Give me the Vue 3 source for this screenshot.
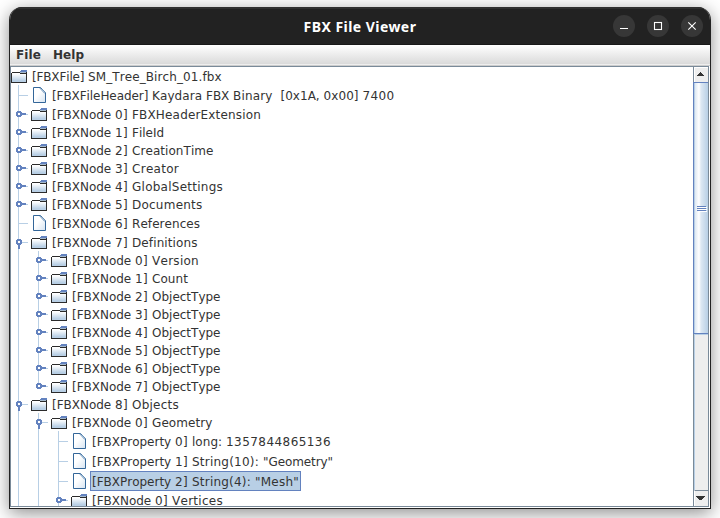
<script setup>
const node = (depth, index, name, extra = {}) => ({ depth, text: `[FBXNode ${index}] ${name}`, icon: 'folder', handle: 'closed', ...extra })

const rows = [
  { depth: 0, text: '[FBXFile] SM_Tree_Birch_01.fbx', icon: 'folder' },
  { depth: 1, text: '[FBXFileHeader] Kaydara FBX Binary  [0x1A, 0x00] 7400', icon: 'file' },
  node(1, 0, 'FBXHeaderExtension'),
  node(1, 1, 'FileId'),
  node(1, 2, 'CreationTime'),
  node(1, 3, 'Creator'),
  node(1, 4, 'GlobalSettings'),
  node(1, 5, 'Documents'),
  node(1, 6, 'References', { icon: 'file', handle: null }),
  node(1, 7, 'Definitions', { handle: 'open' }),
  node(2, 0, 'Version'),
  node(2, 1, 'Count'),
  node(2, 2, 'ObjectType'),
  node(2, 3, 'ObjectType'),
  node(2, 4, 'ObjectType'),
  node(2, 5, 'ObjectType'),
  node(2, 6, 'ObjectType'),
  node(2, 7, 'ObjectType', { last: true }),
  node(1, 8, 'Objects', { handle: 'open' }),
  node(2, 0, 'Geometry', { handle: 'open' }),
  { depth: 3, text: '[FBXProperty 0] long: 1357844865136', icon: 'file' },
  { depth: 3, text: '[FBXProperty 1] String(10): "Geometry"', icon: 'file' },
  { depth: 3, text: '[FBXProperty 2] String(4): "Mesh"', icon: 'file', selected: true },
  node(3, 0, 'Vertices'),
]

// Swing lays glyphs out on whole-pixel hinted advances; spread each word's drift over its letters.
const hinting = {
  '[FBXFile]': -1, 'SM_Tree_Birch_01.fbx': 1.5, Kaydara: 1, Binary: 1.5, '[0x1A,': -1, '0x00]': -1,
  FBXHeaderExtension: 4, CreationTime: 2.5, Creator: 3, GlobalSettings: 4, Documents: 1.5,
  References: 2, Definitions: 2.5, Version: 3, ObjectType: 0.5, Objects: 2, Geometry: 1.5,
  '1357844865136': 1, '"Geometry"': -1, '"Mesh"': 1, Vertices: 3,
}
const ctx = document.createElement('canvas').getContext('2d')
ctx.font = '12px "DejaVu Sans"'
ctx.fontKerning = 'none'
const advance = (c) => ctx.measureText(c.repeat(10)).width / 10
const words = (text) => text.match(/\S+\s*/g).map((word) => {
  const drift = [...word].reduce((sum, c) => sum + Math.round(advance(c)) - advance(c), hinting[word.trim()] ?? 0)
  return { word, spacing: `${(drift / word.length).toFixed(4)}px` }
})
</script>

<template>
  <div class="desktop">
    <div class="window">
      <header class="titlebar">
        <span class="side"></span>
        <h1>FBX File Viewer</h1>
        <div class="side controls">
          <button aria-label="Minimize"><svg width="22" height="22"><path d="M7 13.5h8" /></svg></button>
          <button aria-label="Maximize"><svg width="22" height="22"><rect x="7.5" y="7.5" width="7" height="7" /></svg></button>
          <button aria-label="Close"><svg width="22" height="22"><path d="M7.3 7.3l7.4 7.4M14.7 7.3l-7.4 7.4" /></svg></button>
        </div>
      </header>
      <nav class="menubar"><span>File</span><span>Help</span></nav>
      <main class="pane">
        <div class="tree">
          <div v-for="(row, i) in rows" :key="i" class="row" :class="row.icon">
            <span v-for="d in row.depth" :key="d" class="guide" :class="{ last: row.last && d === row.depth }">
              <svg v-if="d === row.depth" width="20" height="18" shape-rendering="crispEdges">
                <path d="M8 9.5h9" stroke="#b8cfe5" />
                <g v-if="row.handle" fill="#6382bf">
                  <path d="M6 6h4v1h1v4h-1v1H6v-1H5V7h1z" />
                  <path v-if="row.handle === 'closed'" d="M11 8h4v2h-4z" />
                  <path v-else d="M7 12h2v4H7z" />
                  <path d="M7 8h2v2H7z" fill="#fff" />
                </g>
              </svg>
            </span>
            <svg v-if="row.icon === 'folder'" class="icon" width="16" height="18" shape-rendering="crispEdges">
              <defs>
                <linearGradient id="folderFill" x1="0" y1="0" x2="0" y2="1">
                  <stop offset="0.1" stop-color="#fff" />
                  <stop offset="0.85" stop-color="#b8cfe5" />
                </linearGradient>
              </defs>
              <path d="M1 6h14v9H1z" fill="url(#folderFill)" />
              <path d="M10 3h6v2H9V4h1z" fill="#6382bf" />
              <path d="M9 5h6v1H9z" fill="#a3b8cc" />
              <path d="M1 5h8v1h6V5h1v11H0V6h1zM1 6v9h14V7H9V6z" fill="#2b2b2b" fill-rule="evenodd" />
            </svg>
            <svg v-else class="icon" width="16" height="16">
              <defs>
                <linearGradient id="fileFill" x1="0" y1="0" x2="1" y2="1">
                  <stop offset="0.4" stop-color="#fff" />
                  <stop offset="1" stop-color="#d5e3f1" />
                </linearGradient>
              </defs>
              <path d="M2.5.5h7l5 5v10h-12z" fill="url(#fileFill)" stroke="#336699" />
              <path d="M8.8 1l5.2 5.5" fill="none" stroke="#336699" stroke-width="0.9" />
              <path d="M10 1.6l3.8 3.8" fill="none" stroke="#b8cfe5" stroke-width="1" />
            </svg>
            <span class="label" :class="{ selected: row.selected }"><span v-for="(w, k) in words(row.text)" :key="k" :style="{ letterSpacing: w.spacing }">{{ w.word }}</span></span>
          </div>
        </div>
        <aside class="scrollbar">
          <div class="arrow up"><svg width="14" height="14" shape-rendering="crispEdges"><path d="M5 4h1v1h1v1h1v1h1v1H2V7h1V6h1V5h1z" /></svg></div>
          <div class="thumb"><i></i><i></i><i></i></div>
          <div class="track"></div>
          <div class="arrow down"><svg width="14" height="14" shape-rendering="crispEdges"><path d="M1 5h9v1H9v1H8v1H7v1H4V8H3V7H2V6H1z" /></svg></div>
        </aside>
      </main>
    </div>
  </div>
</template>

<style>
body { background: #fff; overflow: hidden; }
</style>

<style scoped>
* { box-sizing: border-box; }
.desktop { width: 720px; height: 518px; padding: 7px 9px 9px; overflow: hidden; }
.window {
  display: flex; flex-direction: column; width: 702px; height: 502px;
  border: solid #222; border-width: 0 1px 1px; border-radius: 13px 13px 0 0;
  background: #fff; overflow: hidden; box-shadow: 0 4px 18px rgba(0, 0, 0, .45);
}
.titlebar {
  display: flex; align-items: center; justify-content: space-between; flex: none; height: 38px; padding: 0 7px 1px 0;
  background: #222; border-top: 2px solid #303030; border-bottom: 1px solid #181818;
}
.side { width: 100px; }
h1 { margin: 0; padding: 1px 0 0 7px; font: bold 14px/20px "Noto Sans", sans-serif; letter-spacing: .45px; color: #fff; }
.controls { display: flex; justify-content: flex-end; gap: 12px; }
button { width: 22px; height: 22px; padding: 0; border: 0; border-radius: 50%; background: #373737; }
button svg { display: block; fill: none; stroke: #fff; stroke-width: 1.1; }
.menubar {
  display: flex; gap: 12px; flex: none; height: 21px; padding: 0 6px;
  background: linear-gradient(#fff, #dadada 19px, #eee 19px, #eee 20px, #ccc 20px);
  font: bold 12px/21px "DejaVu Sans", sans-serif; letter-spacing: .1px; color: #333;
}
.pane { display: flex; flex: 1; min-height: 0; margin: 0 1px 1px 0; border: 1px solid #7a8a99; }
.tree { flex: 1; overflow: hidden; font: 12px/20px "DejaVu Sans", sans-serif; font-kerning: none; color: #333; }
.row { display: flex; height: 18px; align-items: center; white-space: pre; }
.row.file { height: 20px; }
.guide {
  display: flex; align-items: center; flex: none; width: 20px; height: 100%;
  background: linear-gradient(#b8cfe5, #b8cfe5) 7px 0 / 1px 100% no-repeat;
}
.guide.last { background-size: 1px 9px; }
.icon { flex: none; }
.label { margin-left: 3px; padding: 0 1px; border: 1px solid transparent; height: 20px; }
.selected { background: #b8cfe5; border-color: #6382bf; }
.scrollbar { display: flex; flex-direction: column; flex: none; width: 15px; border-left: 1px solid #7a8a99; }
.arrow { flex: none; height: 15px; background: #eee; border: solid #fff; border-width: 1px 0 0 1px; }
.arrow svg { display: block; fill: #333; }
.down { height: 16px; border-top: 1px solid #7a8a99; }
.thumb {
  display: flex; flex-direction: column; justify-content: center; align-items: center; gap: 1px;
  flex: none; height: 252px; margin-left: -1px; border: solid #6382bf; border-width: 1px 0 1px 1px;
  background: linear-gradient(90deg, #b8cfe5 1px, #dde8f3 1px, #fff 5px, #dde8f3 7px, #b8cfe5);
}
.thumb i { width: 9px; height: 1px; background: #6382bf; box-shadow: 1px 1px #fff; }
.track { flex: 1; background: #eee; border: solid #b8cfe5; border-width: 1px 0 0 1px; }
</style>
